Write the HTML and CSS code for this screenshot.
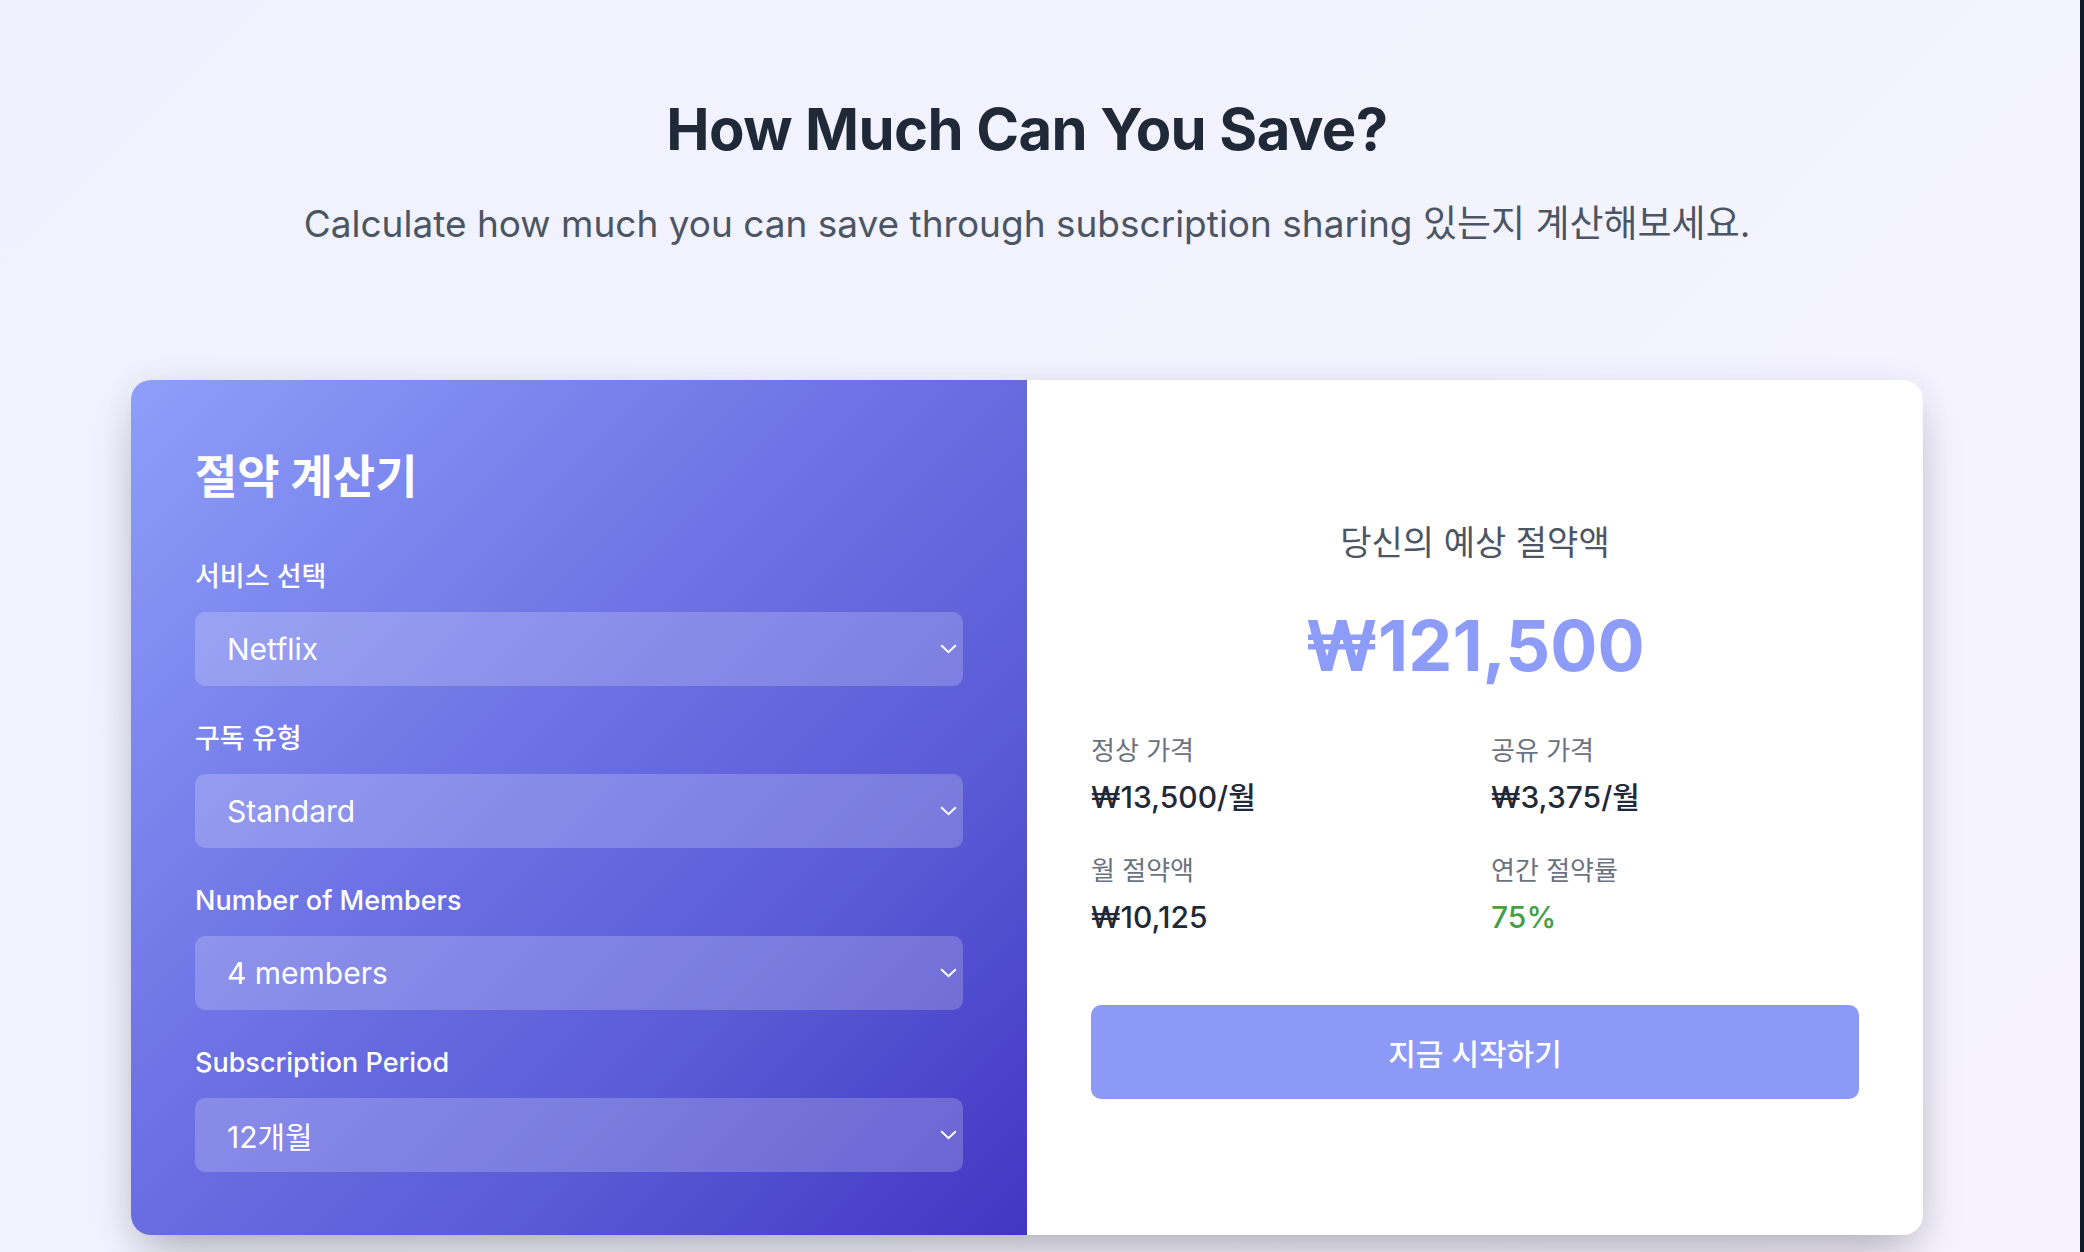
FILE: index.html
```html
<!DOCTYPE html>
<html lang="ko">
<head>
<meta charset="utf-8">
<title>How Much Can You Save?</title>
<link rel="stylesheet" href="styles.css">
</head>
<body>
<main class="page">
  <header class="intro">
    <h1 class="title">How Much Can You Save?</h1>
    <p class="subtitle">Calculate how much you can save through subscription sharing 있는지 계산해보세요.</p>
  </header>
  <section class="card">
    <div class="calc">
      <h2 class="calc-title">절약 계산기</h2>
      <div class="field">
        <div class="label">서비스 선택</div>
        <div class="select"><span>Netflix</span><svg class="chev" width="17" height="10" viewBox="0 0 17 10"><polyline points="1.2,1.2 8.5,8.2 15.8,1.2" fill="none" stroke="#fff" stroke-width="2"/></svg></div>
      </div>
      <div class="field">
        <div class="label">구독 유형</div>
        <div class="select"><span>Standard</span><svg class="chev" width="17" height="10" viewBox="0 0 17 10"><polyline points="1.2,1.2 8.5,8.2 15.8,1.2" fill="none" stroke="#fff" stroke-width="2"/></svg></div>
      </div>
      <div class="field">
        <div class="label">Number of Members</div>
        <div class="select"><span>4 members</span><svg class="chev" width="17" height="10" viewBox="0 0 17 10"><polyline points="1.2,1.2 8.5,8.2 15.8,1.2" fill="none" stroke="#fff" stroke-width="2"/></svg></div>
      </div>
      <div class="field">
        <div class="label">Subscription Period</div>
        <div class="select"><span>12개월</span><svg class="chev" width="17" height="10" viewBox="0 0 17 10"><polyline points="1.2,1.2 8.5,8.2 15.8,1.2" fill="none" stroke="#fff" stroke-width="2"/></svg></div>
      </div>
    </div>
    <div class="result">
      <div class="result-label">당신의 예상 절약액</div>
      <div class="amount">₩121,500</div>
      <div class="stats">
        <div class="stat">
          <div class="stat-label">정상 가격</div>
          <div class="stat-value">₩13,500/월</div>
        </div>
        <div class="stat">
          <div class="stat-label">공유 가격</div>
          <div class="stat-value">₩3,375/월</div>
        </div>
        <div class="stat">
          <div class="stat-label">월 절약액</div>
          <div class="stat-value">₩10,125</div>
        </div>
        <div class="stat">
          <div class="stat-label">연간 절약률</div>
          <div class="stat-value green">75%</div>
        </div>
      </div>
      <button class="cta">지금 시작하기</button>
    </div>
  </section>
</main>
<div class="edge"></div>
</body>
</html>
```
FILE: styles.css
```css
* { box-sizing: border-box; }
html, body { margin: 0; padding: 0; }
body {
  display: flex;
  min-height: 100vh;
  height: 1252px;
  overflow: hidden;
  background: linear-gradient(135deg, #eff1fe 0%, #f3f3fe 50%, #f6f3fe 100%);
  font-family: Inter, "Noto Sans CJK KR", sans-serif;
  color: #1f2937;
}
.page {
  flex: 1;
  padding: 94px 26px 0 0;
}
.edge {
  width: 4px;
  background: #111827;
}
.intro { text-align: center; }
.title {
  margin: 0;
  font-size: 58px;
  line-height: 70px;
  font-weight: 700;
  color: #1f2937;
  letter-spacing: -0.6px;
}
.subtitle {
  margin: 33px 0 0;
  font-size: 37px;
  line-height: 54px;
  font-weight: 400;
  color: #4b5563;
}
.card {
  width: 1792px;
  margin: 129px auto 0;
  display: grid;
  grid-template-columns: 1fr 1fr;
  border-radius: 20px;
  overflow: hidden;
  background: #fff;
  box-shadow: 0 25px 50px -12px rgba(0, 0, 0, 0.28), 0 0 30px rgba(60, 60, 120, 0.07);
}
.calc {
  padding: 64px 64px 63px;
  background: linear-gradient(135deg, #8e9ef9 0%, #6b70e3 45%, #5a5bd6 70%, #4136c3 100%);
  color: #fff;
}
.calc-title {
  margin: 0 0 49px;
  font-size: 46px;
  line-height: 64px;
  font-weight: 700;
}
.field + .field { margin-top: 33px; }
.label {
  font-size: 27px;
  line-height: 39px;
  font-weight: 500;
  margin-bottom: 16px;
}
.select {
  height: 74px;
  border-radius: 10px;
  background: rgba(255, 255, 255, 0.2);
  display: flex;
  align-items: center;
  justify-content: space-between;
  padding: 0 6px 0 32px;
  font-size: 30px;
  font-weight: 400;
}
.chev { display: block; }
.result {
  padding: 140px 64px 0;
  display: flex;
  flex-direction: column;
}
.result-label {
  text-align: center;
  font-size: 34px;
  line-height: 45px;
  color: #4b5563;
}
.amount {
  margin-top: 39px;
  text-align: center;
  font-size: 70px;
  line-height: 84px;
  font-weight: 700;
  color: #8d9cf8;
}
.stats {
  margin-top: 45px;
  display: grid;
  grid-template-columns: 1fr 1fr;
  column-gap: 32px;
  row-gap: 33px;
}
.stat-label {
  font-size: 26px;
  line-height: 36px;
  color: #6b7280;
}
.stat-value {
  margin-top: 6px;
  font-size: 30px;
  line-height: 45px;
  font-weight: 500;
  color: #1f2937;
}
.stat-value.green { color: #43a047; }
.cta {
  margin-top: 65px;
  height: 94px;
  border: 0;
  border-radius: 10px;
  background: #8c99f7;
  color: #fff;
  font-family: inherit;
  font-size: 30px;
  font-weight: 500;
}
```
